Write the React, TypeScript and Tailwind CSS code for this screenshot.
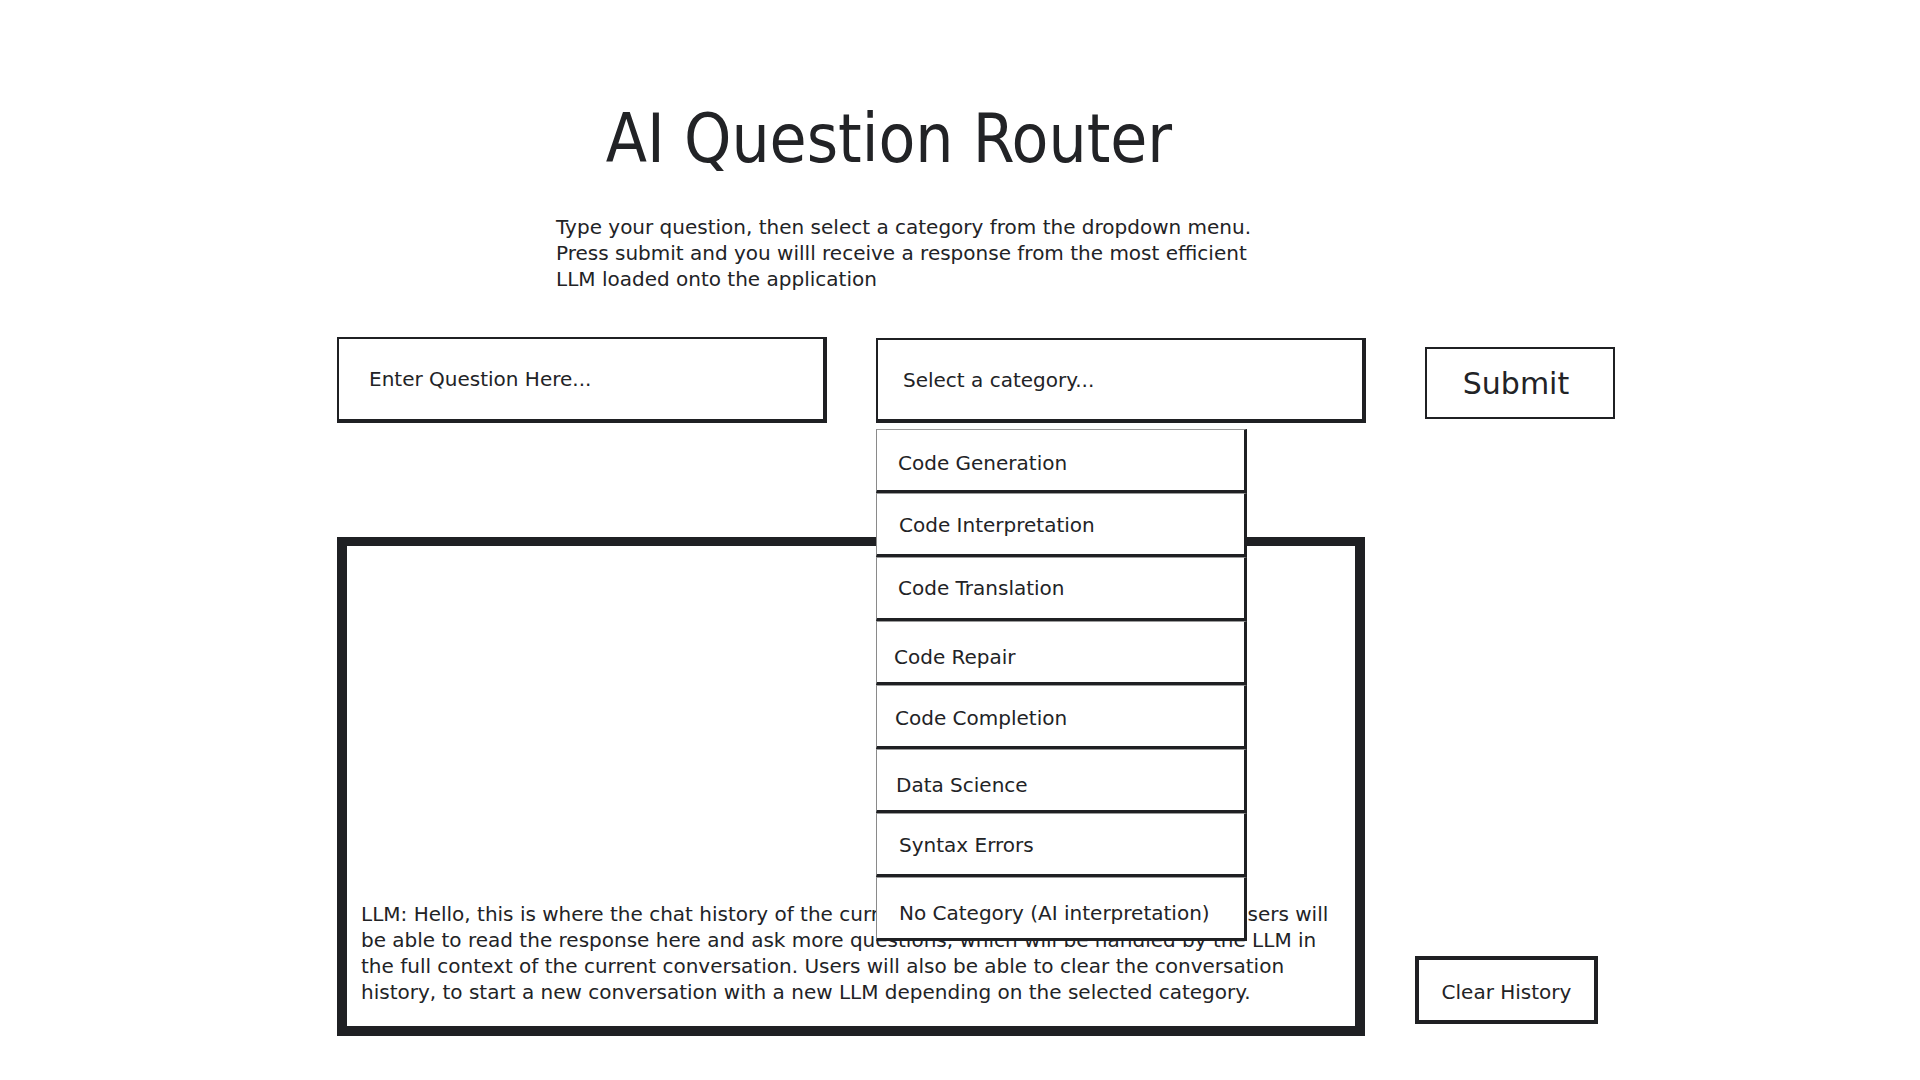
const categories = [
  { label: "Code Generation", pad: "pl-[21px] pt-[5px]" },
  { label: "Code Interpretation", pad: "pl-[22px] pt-[2px]" },
  { label: "Code Translation", pad: "pl-[21px] pt-0" },
  { label: "Code Repair", pad: "pl-[17px] pt-[9px]" },
  { label: "Code Completion", pad: "pl-[18px] pt-[4px]" },
  { label: "Data Science", pad: "pl-[19px] pt-[9px]" },
  { label: "Syntax Errors", pad: "pl-[22px] pt-[2px]" },
  { label: "No Category (AI interpretation)", pad: "pl-[22px] pt-[9px]" },
];

export default function App() {
  return (
    <div
      className="min-h-screen w-full bg-white text-[#222326]"
      style={{ fontFamily: "'DejaVu Sans', sans-serif" }}
    >
      <div className="pl-[337px] pt-[106px]">
        <h1
          className="w-[1104px] text-center text-[67px] leading-none font-normal [font-stretch:condensed]"
          style={{ fontFamily: "'DejaVu Sans Condensed', 'DejaVu Sans', sans-serif" }}
        >
          AI Question Router
        </h1>

        <p className="ml-[219px] mt-[41px] text-[20px] leading-[26px]">
          Type your question, then select a category from the dropdown menu.
          <br />
          Press submit and you willl receive a response from the most efficient
          <br />
          LLM loaded onto the application
        </p>

        <div className="mt-[45px] flex items-start">
          <div className="flex h-[86px] w-[490px] items-center border-2 border-r-4 border-b-4 border-[#1f2023] pl-[30px] text-[20px]">
            Enter Question Here...
          </div>

          <div className="relative ml-[49px] mt-[1px]">
            <div className="flex h-[85px] w-[490px] items-center border-2 border-r-4 border-b-4 border-[#1f2023] pl-[25px] text-[20px]">
              Select a category...
            </div>
            <ul className="absolute left-0 top-[91px] z-10 w-[371px]">
              {categories.map((c) => (
                <li
                  key={c.label}
                  className={`flex h-[64px] items-center border border-r-[3px] border-b-[3px] border-[#1f2023] border-t-[#9a9a9a] border-l-[#8a8a8a] bg-white text-[20px] ${c.pad}`}
                >
                  {c.label}
                </li>
              ))}
            </ul>
          </div>

          <button className="ml-[59px] mt-[10px] flex h-[72px] w-[190px] items-center justify-center border-2 border-[#1f2023] bg-white pr-[8px] text-[30px]">
            Submit
          </button>
        </div>

        <div className="mt-[114px] flex items-end">
          <div className="flex h-[499px] w-[1028px] flex-col justify-end border-[10px] border-t-[9px] border-[#1f2023] pb-[21px] pl-[14px] pr-[10px]">
            <p className="text-[20px] leading-[26px]">
              LLM: Hello, this is where the chat history of the current conversation will be displayed. Users will
              <br />
              be able to read the response here and ask more questions, which will be handled by the LLM in
              <br />
              the full context of the current conversation. Users will also be able to clear the conversation
              <br />
              history, to start a new conversation with a new LLM depending on the selected category.
            </p>
          </div>

          <button className="mb-[12px] ml-[50px] flex h-[68px] w-[183px] items-center justify-center border-4 border-[#1f2023] bg-white pt-[4px] text-[20px]">
            Clear History
          </button>
        </div>
      </div>
    </div>
  );
}
